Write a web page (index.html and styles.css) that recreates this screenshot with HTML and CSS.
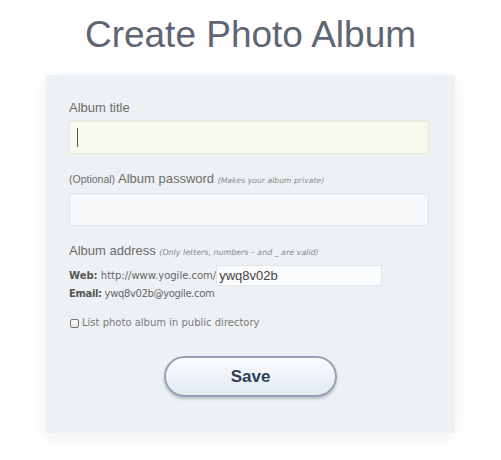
FILE: index.html
```html
<!DOCTYPE html>
<html>
<head>
<meta charset="utf-8">
<link rel="stylesheet" href="styles.css">
</head>
<body>
<h1 class="page-title">Create Photo Album</h1>
<form class="card">
  <div class="field">
    <label class="label">Album title</label>
    <div class="input input-active"><span class="caret"></span></div>
  </div>
  <div class="field field-password">
    <label class="label"><span class="small">(Optional)</span> Album password <em class="hint">(Makes your album private)</em></label>
    <div class="input"></div>
  </div>
  <div class="field field-address">
    <label class="label">Album address <em class="hint hint-wide">(Only letters, numbers – and _ are valid)</em></label>
    <div class="addr-row addr-web"><b>Web:</b> http://www.yogile.com/<span class="web-input">ywq8v02b</span></div>
    <div class="addr-row addr-email"><b>Email:</b> ywq8v02b@yogile.com</div>
  </div>
  <div class="check-row"><span class="checkbox"></span>List photo album in public directory</div>
  <div class="actions"><span class="save-btn">Save</span></div>
</form>
</body>
</html>
```
FILE: styles.css
```css
html, body {
  margin: 0;
  padding: 0;
  background: #ffffff;
}
body {
  font-family: "Liberation Sans", Arial, sans-serif;
  width: 501px;
  height: 460px;
  overflow: hidden;
}
.page-title {
  margin: 0;
  padding-top: 16px;
  font-size: 37px;
  line-height: 37px;
  font-weight: normal;
  color: #5e6574;
  text-align: center;
}
.card {
  display: block;
  width: 409px;
  height: 358px;
  box-sizing: border-box;
  margin: 22px auto 0;
  padding: 25px 26px 0 23px;
  background: #edf1f4;
  box-shadow: 0 4px 18px rgba(0, 0, 0, 0.07);
}
.field {
  display: flex;
  flex-direction: column;
}
.label {
  font-size: 13px;
  line-height: 16px;
  color: #6c6c6c;
  white-space: nowrap;
}
.small {
  font-size: 10.5px;
}
.hint {
  font-family: "DejaVu Sans", Verdana, sans-serif;
  font-size: 7.7px;
  color: #888;
}
.hint-wide {
  font-size: 7.9px;
}
.input {
  margin-top: 4px;
  height: 34px;
  box-sizing: border-box;
  border: 1px solid #e3e6e9;
  background: #f8f9fb;
  box-shadow: inset 0 1px 2px rgba(0, 0, 0, 0.05);
  position: relative;
}
.input-active {
  background: #f9f9ee;
  border-color: #e6e7e0;
}
.caret {
  position: absolute;
  left: 7px;
  top: 7px;
  width: 1px;
  height: 19px;
  background: #555;
}
.field-password {
  margin-top: 17px;
}
.field-password .input {
  height: 33px;
  margin-top: 4px;
}
.field-address {
  margin-top: 17px;
}
.addr-row {
  font-family: "DejaVu Sans", Verdana, sans-serif;
  font-size: 10px;
  line-height: 12px;
  color: #666;
  display: flex;
  align-items: center;
  white-space: pre;
}
.addr-row b {
  color: #555;
}
.addr-web {
  margin-top: 4px;
}
.addr-email {
  margin-top: 2px;
  letter-spacing: -0.35px;
}
.web-input {
  width: 166px;
  height: 21px;
  box-sizing: border-box;
  border: 1px solid #e3e6e9;
  background: #fafbfc;
  font-family: "Liberation Sans", Arial, sans-serif;
  font-size: 13px;
  color: #444;
  padding-left: 2px;
  display: flex;
  align-items: center;
}
.check-row {
  margin-top: 17px;
  margin-left: 1px;
  font-family: "DejaVu Sans", Verdana, sans-serif;
  font-size: 10px;
  line-height: 12px;
  color: #7a7a7a;
  display: flex;
  align-items: center;
}
.checkbox {
  width: 7px;
  height: 7px;
  border: 1px solid #777;
  border-radius: 2px;
  background: linear-gradient(#fff, #e6e6e6);
  margin-right: 3px;
  margin-top: 1px;
}
.actions {
  display: flex;
  justify-content: center;
  margin-top: 27px;
}
.save-btn {
  width: 173px;
  height: 41px;
  box-sizing: border-box;
  border: 2px solid #93a1b0;
  border-radius: 21px;
  background: linear-gradient(#fafcfe, #e3eaf3);
  box-shadow: 0 2px 3px rgba(60, 80, 100, 0.3), inset 0 1px 0 #fff;
  display: flex;
  align-items: center;
  justify-content: center;
  font-size: 17px;
  font-weight: bold;
  color: #2d4058;
  margin-left: 3px;
}
```
